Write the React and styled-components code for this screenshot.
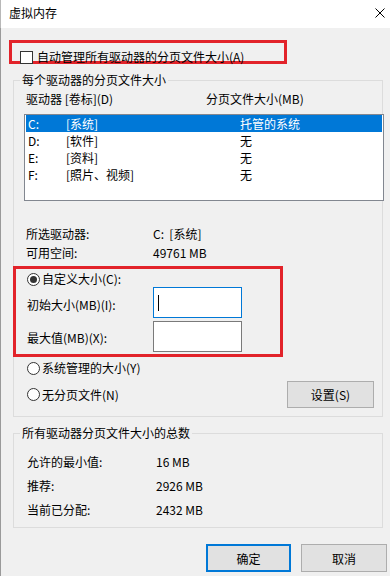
import styled, { createGlobalStyle } from "styled-components";

const GlobalStyle = createGlobalStyle`
  html, body {
    margin: 0;
    padding: 0;
    background: #f0f0f0;
  }
  * {
    box-sizing: border-box;
  }
`;

const Window = styled.div`
  width: 390px;
  height: 576px;
  background: #f0f0f0;
  box-shadow: inset 1px 0 0 #9a9a9a;
  font-family: "Noto Sans CJK SC", "Noto Sans", sans-serif;
  font-size: 12px;
  line-height: 16px;
  color: #000;
  overflow: hidden;
`;

const TitleBar = styled.div`
  height: 28px;
  background: #fff;
  display: flex;
  align-items: center;
  justify-content: space-between;
  padding: 0 5px 2px 9px;
  box-shadow: inset 1px 0 0 #b8b8b8;
`;

const Highlight = styled.div`
  border: 3px solid #e2232a;
  width: ${(p) => p.$w}px;
  height: ${(p) => p.$h}px;
  margin-left: ${(p) => p.$left}px;
  margin-top: ${(p) => p.$top}px;
  padding: ${(p) => p.$pad};
`;

const CheckRow = styled.div`
  display: flex;
  align-items: center;
  gap: 4px;
`;

const CheckBox = styled.span`
  width: 13px;
  height: 13px;
  border: 1px solid #333;
  background: #fff;
  flex: none;
`;

const Group = styled.div`
  width: 370px;
  margin: ${(p) => p.$top}px 0 0 13px;
  border: 1px solid #dcdcdc;
  padding-bottom: ${(p) => p.$bottom}px;
`;

const Caption = styled.div`
  width: fit-content;
  margin: -9px 0 0 6px;
  padding: 0 2px;
  background: #f0f0f0;
  line-height: 16px;
`;

const HeaderRow = styled.div`
  display: flex;
  margin-top: 3px;
  padding-left: 12px;
`;

const Cell = styled.span`
  width: ${(p) => p.$w}px;
  flex: none;
  white-space: nowrap;
`;

const ListBox = styled.div`
  width: 360px;
  height: 87px;
  margin: 7px 0 0 10px;
  border: 1px solid #828790;
  background: #fff;
`;

const ListRow = styled.div`
  display: flex;
  height: 17px;
  line-height: 17px;
  margin: 0 1px;
  padding-left: 2px;
  background: ${(p) => (p.$selected ? "#0078d7" : "transparent")};
  color: ${(p) => (p.$selected ? "#fff" : "#000")};
`;

const InfoList = styled.div`
  margin-top: ${(p) => p.$top}px;
  padding-left: ${(p) => p.$pad}px;
`;

const InfoRow = styled.div`
  display: flex;
  height: ${(p) => p.$h}px;
  align-items: center;
`;

const RadioRow = styled.div`
  display: flex;
  align-items: center;
  gap: 2px;
  height: 16px;
`;

const Radio = styled.span`
  width: 13px;
  height: 13px;
  border-radius: 50%;
  border: 1px solid #333;
  background: #fff;
  display: flex;
  align-items: center;
  justify-content: center;
  flex: none;
  &::after {
    content: "";
    width: 7px;
    height: 7px;
    border-radius: 50%;
    background: ${(p) => (p.$checked ? "#333" : "transparent")};
  }
`;

const FieldRow = styled.div`
  display: flex;
  align-items: center;
  margin-top: ${(p) => p.$top}px;
`;

const FieldLabel = styled.span`
  width: 126px;
  flex: none;
  padding-top: ${(p) => p.$nudge}px;
`;

const TextBox = styled.div`
  width: 89px;
  height: 31px;
  background: #fff;
  border: 1px solid ${(p) => (p.$focused ? "#0078d7" : "#7a7a7a")};
  display: flex;
  align-items: center;
  padding-left: 4px;
`;

const Caret = styled.span`
  width: 1px;
  height: 16px;
  background: #000;
`;

const Options = styled.div`
  padding: 0 8px 0 13px;
`;

const OptionBottom = styled.div`
  display: flex;
  align-items: center;
  justify-content: space-between;
  margin-top: 5px;
`;

const Button = styled.button`
  width: ${(p) => p.$w}px;
  height: ${(p) => p.$h}px;
  background: #e1e1e1;
  border: ${(p) => (p.$default ? "2px solid #0078d7" : "1px solid #adadad")};
  font-family: inherit;
  font-size: 12px;
  color: #000;
  padding: 0;
`;

const Footer = styled.div`
  display: flex;
  justify-content: flex-end;
  gap: 10px;
  margin-top: 16px;
  padding-right: 3px;
`;

const drives = [
  ["C:", "[系统]", "托管的系统"],
  ["D:", "[软件]", "无"],
  ["E:", "[资料]", "无"],
  ["F:", "[照片、视频]", "无"],
];

const totals = [
  ["允许的最小值:", "16 MB"],
  ["推荐:", "2926 MB"],
  ["当前已分配:", "2432 MB"],
];

function CloseIcon() {
  return (
    <svg width="10" height="10" viewBox="0 0 10 10">
      <path d="M0.5 0.5L9.5 9.5M9.5 0.5L0.5 9.5" stroke="#000" strokeWidth="1" />
    </svg>
  );
}

function App() {
  return (
    <>
      <GlobalStyle />
      <Window>
        <TitleBar>
          <span>虚拟内存</span>
          <CloseIcon />
        </TitleBar>

        <Highlight $w={278} $h={24} $left={9} $top={12} $pad="6px 0 0 8px">
          <CheckRow>
            <CheckBox />
            <span>自动管理所有驱动器的分页文件大小(A)</span>
          </CheckRow>
        </Highlight>

        <Group $top={16} $bottom={8}>
          <Caption>每个驱动器的分页文件大小</Caption>
          <HeaderRow>
            <Cell $w={180}>驱动器 [卷标](D)</Cell>
            <Cell>分页文件大小(MB)</Cell>
          </HeaderRow>
          <ListBox>
            {drives.map(([drive, label, size], i) => (
              <ListRow key={drive} $selected={i === 0}>
                <Cell $w={38}>{drive}</Cell>
                <Cell $w={174}>{label}</Cell>
                <Cell>{size}</Cell>
              </ListRow>
            ))}
          </ListBox>

          <InfoList $top={23} $pad={12}>
            <InfoRow $h={19}>
              <Cell $w={127}>所选驱动器:</Cell>
              <Cell>C:&nbsp;&nbsp;[系统]</Cell>
            </InfoRow>
            <InfoRow $h={19}>
              <Cell $w={127}>可用空间:</Cell>
              <Cell>49761 MB</Cell>
            </InfoRow>
          </InfoList>

          <Highlight $w={270} $h={91} $left={-1} $top={4} $pad="2px 0 0 11px">
            <RadioRow>
              <Radio $checked />
              <span>自定义大小(C):</span>
            </RadioRow>
            <FieldRow $top={0}>
              <FieldLabel $nudge={4}>初始大小(MB)(I):</FieldLabel>
              <TextBox $focused>
                <Caret />
              </TextBox>
            </FieldRow>
            <FieldRow $top={3}>
              <FieldLabel $nudge={2}>最大值(MB)(X):</FieldLabel>
              <TextBox />
            </FieldRow>
          </Highlight>

          <Options>
            <RadioRow style={{ marginTop: 3 }}>
              <Radio />
              <span>系统管理的大小(Y)</span>
            </RadioRow>
            <OptionBottom>
              <RadioRow>
                <Radio />
                <span>无分页文件(N)</span>
              </RadioRow>
              <Button $w={87} $h={27}>设置(S)</Button>
            </OptionBottom>
          </Options>
        </Group>

        <Group $top={16} $bottom={5}>
          <Caption>所有驱动器分页文件大小的总数</Caption>
          <InfoList $top={9} $pad={13}>
            {totals.map(([label, value]) => (
              <InfoRow key={label} $h={24}>
                <Cell $w={129}>{label}</Cell>
                <Cell>{value}</Cell>
              </InfoRow>
            ))}
          </InfoList>
        </Group>

        <Footer>
          <Button $w={85} $h={28} $default>
            确定
          </Button>
          <Button $w={86} $h={28}>
            取消
          </Button>
        </Footer>
      </Window>
    </>
  );
}

export default App;
